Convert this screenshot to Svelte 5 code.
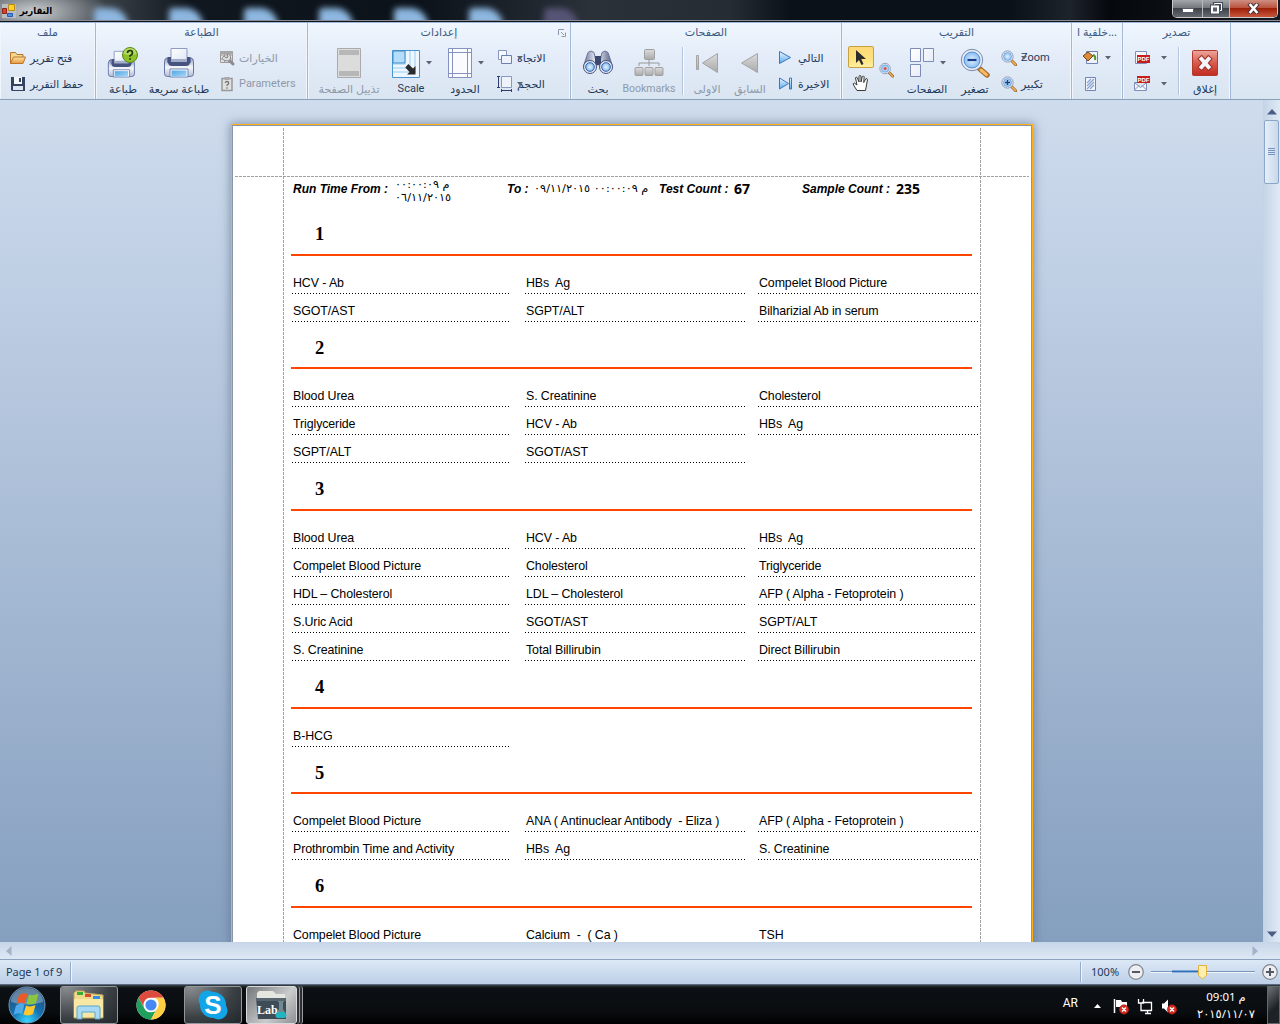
<script>
  const sections = [
    { no: 1, wide: true, tests: ['HCV - Ab', 'HBs  Ag', 'Compelet Blood Picture', 'SGOT/AST', 'SGPT/ALT', 'Bilharizial Ab in serum'] },
    { no: 2, wide: true, tests: ['Blood Urea', 'S. Creatinine', 'Cholesterol', 'Triglyceride', 'HCV - Ab', 'HBs  Ag', 'SGPT/ALT', 'SGOT/AST'] },
    { no: 3, tests: ['Blood Urea', 'HCV - Ab', 'HBs  Ag', 'Compelet Blood Picture', 'Cholesterol', 'Triglyceride', 'HDL – Cholesterol', 'LDL – Cholesterol', 'AFP ( Alpha - Fetoprotein )', 'S.Uric Acid', 'SGOT/AST', 'SGPT/ALT', 'S. Creatinine', 'Total Billirubin', 'Direct Billirubin'] },
    { no: 4, tests: ['B-HCG'] },
    { no: 5, wide: true, tests: ['Compelet Blood Picture', 'ANA ( Antinuclear Antibody  - Eliza )', 'AFP ( Alpha - Fetoprotein )', 'Prothrombin Time and Activity', 'HBs  Ag', 'S. Creatinine'] },
    { no: 6, tests: ['Compelet Blood Picture', 'Calcium  -  ( Ca )', 'TSH'] }
  ];
</script>

{#snippet caret()}
  <svg class="caret" width="6" height="4" viewBox="0 0 6 4"><path d="M0 0h6L3 3.5z" fill="#5b6470" /></svg>
{/snippet}

{#snippet printer()}
  <path d="M8 1.500h16v12H8z" fill="url(#paper)" stroke="#8d9cc0" />
  <path d="M4.500 10.500q-3 1-3 4v12q0 3 3 3h23q3 0 3-3v-12q0-3-3-4v5h-23z" fill="url(#steel)" stroke="#6474a4" />
  <path d="M5 10h3v4h16v-4h3v5q0 4-4 4H9q-4 0-4-4z" fill="#46527f" />
  <path d="M8 12h16v3H8z" fill="#a3acc9" />
  <path d="M7 22h18v8H7z" fill="#fff" stroke="#7182ad" />
  <path d="M8.500 23.500h15v6h-15z" fill="url(#sky)" />
{/snippet}

{#snippet lens(mark)}
  <path d="M10.500 10.500l4.200 4.200" stroke="#93612c" stroke-width="3" stroke-linecap="round" />
  <path d="M11 11l3.600 3.600" stroke="#f4b152" stroke-width="1.600" stroke-linecap="round" />
  <circle cx="6.500" cy="6.500" r="5.600" fill="#eef4fb" stroke="#8d99b5" />
  <circle cx="6.500" cy="6.500" r="4" fill="url(#glass)" stroke="#6d9fd6" stroke-width=".7" />
  {#if mark === '+'}<path d="M4 6.500h5M6.500 4v5" stroke="#1b3f8c" stroke-width="1.400" />{/if}
{/snippet}

<svg class="defs" width="0" height="0" aria-hidden="true">
  <defs>
    <linearGradient id="paper" x2="1" y2="1"><stop stop-color="#fff" /><stop offset="1" stop-color="#dfe6f4" /></linearGradient>
    <linearGradient id="steel" x2="0" y2="1"><stop stop-color="#8d98bd" /><stop offset=".5" stop-color="#f4f6fb" /><stop offset="1" stop-color="#b4bdd8" /></linearGradient>
    <linearGradient id="barrel"><stop stop-color="#6a7699" /><stop offset=".45" stop-color="#f4f6fb" /><stop offset="1" stop-color="#4d5a82" /></linearGradient>
    <linearGradient id="sky" x2="1" y2="1"><stop stop-color="#4fa6e4" /><stop offset="1" stop-color="#a9d8f7" /></linearGradient>
    <linearGradient id="grey" x2="0" y2="1"><stop stop-color="#dcdcdc" /><stop offset="1" stop-color="#a9a9a9" /></linearGradient>
    <linearGradient id="play" x2="0" y2="1"><stop stop-color="#eef7ff" /><stop offset="1" stop-color="#56aaf0" /></linearGradient>
    <linearGradient id="red" x2="0" y2="1"><stop stop-color="#eba89c" /><stop offset=".5" stop-color="#d9594c" /><stop offset="1" stop-color="#c22c20" /></linearGradient>
    <linearGradient id="folder" x2="0" y2="1"><stop stop-color="#fbe3a8" /><stop offset="1" stop-color="#e9993c" /></linearGradient>
    <radialGradient id="glass"><stop stop-color="#e4f3ff" /><stop offset="1" stop-color="#86bdf2" /></radialGradient>
    <radialGradient id="orb" cy=".95" r=".9"><stop stop-color="#35d6ff" /><stop offset=".45" stop-color="#1574b4" /><stop offset="1" stop-color="#24476d" /></radialGradient>
  </defs>
</svg>

<div class="window">
  <header class="titlebar">
    <svg class="appicon" width="14" height="14" viewBox="0 0 14 14"><path d="M0 0h14v14H0z" fill="#b9bcc0" /><path d="M6.500.5h6v6h-6z" fill="#ffd02c" stroke="#b68a14" /><path d="M.5 4.500h4v5h-4z" fill="#d8402c" stroke="#8d241a" /><path d="M5.500 9.500h5v3h-5z" fill="#4b8ce8" stroke="#2a5bb0" /></svg>
    <span class="title" dir="rtl">التقارير</span>
    <div class="glow">
      <i></i><i></i><i></i><i></i><i></i><i></i><i class="violet"></i>
    </div>
    <div class="controls">
      <span class="min"><svg width="12" height="5" viewBox="0 0 12 5"><path d="M.5.500h11v4H.5z" fill="#fff" stroke="#555b66" /></svg></span>
      <span class="max"><svg width="13" height="13" viewBox="0 0 13 13"><path d="M4.500 1.500h7v7h-7z" fill="none" stroke="#464d59" stroke-width="3" /><path d="M4.500 1.500h7v7h-7z" fill="none" stroke="#fff" /><path d="M2 4.500h6v6H2z" fill="#59606b" stroke="#464d59" stroke-width="4" /><path d="M2 4.500h6v6H2z" fill="#59606b" stroke="#fff" stroke-width="2" /></svg></span>
      <span class="shut"><svg width="13" height="11" viewBox="0 0 13 11"><path d="M3.500 2l6 7M9.500 2l-6 7" stroke="#51343a" stroke-width="4.500" stroke-linecap="square" /><path d="M3.500 2l6 7M9.500 2l-6 7" stroke="#fff" stroke-width="2.600" stroke-linecap="square" /></svg></span>
    </div>
  </header>

  <nav class="ribbon">
    <section class="group file">
      <h2 dir="rtl">ملف</h2>
      <div class="body">
        <div class="stack">
          <div class="small"><svg width="16" height="16" viewBox="0 0 16 16"><path d="M.5 13.500v-11h5l1.500 2h6v3" fill="#f7d78f" stroke="#b9762b" /><path d="M.5 13.500l3-6.500h12l-2.500 6.500z" fill="url(#folder)" stroke="#b9762b" /></svg><span dir="rtl">فتح تقرير</span></div>
          <div class="small"><svg width="16" height="16" viewBox="0 0 16 16"><path d="M1 1h14v14H2l-1-1z" fill="#34435f" /><path d="M4 1h8v7H4z" fill="#f3f6fb" /><path d="M9 2h2v4H9z" fill="#34435f" /><path d="M3 10h10v4H3z" fill="#dbe5f2" /></svg><span class="snug" dir="rtl">حفظ التقرير</span></div>
        </div>
      </div>
    </section>

    <section class="group print">
      <h2 dir="rtl">الطباعة</h2>
      <div class="body">
        <div class="big">
          <svg width="32" height="32" viewBox="0 0 32 32"><g transform="translate(0 3) scale(.9)">{@render printer()}</g><circle cx="23" cy="8" r="7.500" fill="#8fc12b" stroke="#57881a" /><path d="M16.500 7a6.500 6 0 0 1 13 0q-6 2-13 0z" fill="#c5e37a" opacity=".7" /><path d="M20.500 6q0-2.500 2.500-2.500T25.500 6q0 1.500-2.500 2.800v1M23 11.200v1.600" fill="none" stroke="#1d3a07" stroke-width="1.700" /></svg>
          <span dir="rtl">طباعة</span>
        </div>
        <div class="big"><svg width="32" height="32" viewBox="0 0 32 32">{@render printer()}</svg><span dir="rtl">طباعة سريعة</span></div>
        <div class="stack">
          <div class="small off"><svg width="16" height="16" viewBox="0 0 16 16"><path d="M1.500 1.500h12v11h-12zM1.500 5h12M1.500 9h12M5.500 1.500v11M9.500 1.500v11" fill="#e2e2e2" stroke="#9b9b9b" /><path d="M1 1h13v3H1z" fill="#a5a5a5" /><path d="M8 8l6 6" stroke="#8c8c8c" stroke-width="3" stroke-linecap="round" /><path d="M5 6l2 2 2-1-1-3q4 0 3.500 4T6 10.500 5 6z" fill="#dedede" stroke="#8c8c8c" /></svg><span dir="rtl">الخيارات</span></div>
          <div class="small off"><svg width="16" height="16" viewBox="0 0 16 16"><path d="M3 2.500h10v12H3z" fill="#e0e0e0" stroke="#999" stroke-width="1.500" /><path d="M5.500 1h5v3h-5z" fill="#aaa" /><path d="M6.300 7q0-1.500 1.700-1.500T9.700 7 8 9v1M8 11.300v1.400" fill="none" stroke="#777" stroke-width="1.300" /></svg><span class="en">Parameters</span></div>
        </div>
      </div>
    </section>

    <section class="group settings">
      <h2 dir="rtl">إعدادات</h2>
      <svg class="launcher" width="8" height="8" viewBox="0 0 8 8"><path d="M.5 6V.5H6M3 3l3 3M7.500 3.500v4h-4" fill="none" stroke="#8a99ae" /></svg>
      <div class="body">
        <div class="big off"><svg width="26" height="32" viewBox="0 0 26 32"><path d="M1.500 1.500h23v29h-23z" fill="#dcdcdc" stroke="#aaa" /><path d="M3 3h20v5H3zM3 24h20v5H3z" fill="#b7b7b7" /></svg><span dir="rtl">تذييل الصفحة</span></div>
        <div class="big">
          <div class="pair"><svg width="30" height="32" viewBox="0 0 30 32"><path d="M1.500 3.500h27v27h-27z" fill="#eef7ff" stroke="#4796cf" /><path d="M14 4v13H2M19 4v17H2M24 4v21H2" fill="none" stroke="#b5dcf8" stroke-width="1.500" /><path d="M2 4h12v12H2z" fill="#b4dcfb" stroke="#3c8cc8" /><path d="M17.300 17l4.700 4.500 2.500-2.500v8.500H16l2.500-2.500-4.200-4.500z" fill="#2b2b2b" /></svg>{@render caret()}</div>
          <span class="en">Scale</span>
        </div>
        <div class="big">
          <div class="pair"><svg width="26" height="32" viewBox="0 0 26 32"><path d="M1.500 1.500h23v29h-23z" fill="#fafbff" stroke="#8593bd" /><path d="M5.500 1v30M20.500 1v30M1 5.500h24M1 26.500h24" stroke="#8593bd" /></svg>{@render caret()}</div>
          <span dir="rtl">الحدود</span>
        </div>
        <div class="stack">
          <div class="small over"><svg width="16" height="16" viewBox="0 0 16 16"><path d="M1.500.5h8v9h-8z" fill="#f7f9ff" stroke="#8896c0" /><path d="M4.500 5.500h10v8h-10z" fill="#eef2fb" stroke="#6f7eb0" /></svg><span dir="rtl">الاتجاه</span>{@render caret()}</div>
          <div class="small over"><svg width="16" height="16" viewBox="0 0 16 16"><path d="M4.500.5h10v11h-10z" fill="#eef2fb" stroke="#8896c0" /><path d="M1.500 0v12M0 .5h3M0 11.500h3M4 14.500h11M4.500 13v3M14.500 13v3" stroke="#2d3f6e" /></svg><span dir="rtl">الحجم</span>{@render caret()}</div>
        </div>
      </div>
    </section>

    <section class="group pages">
      <h2 dir="rtl">الصفحات</h2>
      <div class="body">
        <div class="big"><svg width="32" height="32" viewBox="0 0 32 32"><path d="M6 5.500q3-3 6 0l3 13.500H1.500zM20 5.500q3-3 6 0L30.500 19H17z" fill="url(#barrel)" stroke="#69749a" /><path d="M13 9h6v9h-6z" fill="#3c486f" /><circle cx="8" cy="20" r="6.500" fill="#dfe4f0" stroke="#47557f" /><circle cx="24" cy="20" r="6.500" fill="#dfe4f0" stroke="#47557f" /><circle cx="8" cy="20" r="4.300" fill="url(#glass)" stroke="#3561ad" /><circle cx="24" cy="20" r="4.300" fill="url(#glass)" stroke="#3561ad" /></svg><span dir="rtl">بحث</span></div>
        <div class="big off"><svg width="32" height="32" viewBox="0 0 32 32"><path d="M16 12v7M6 19v-3h20v3" fill="none" stroke="#999" /><g fill="url(#grey)" stroke="#a0a0a0"><rect x="11.500" y="2.500" width="10" height="10" rx="1" /><rect x="2" y="20.500" width="8" height="8" rx="1" /><rect x="12" y="20.500" width="8" height="8" rx="1" /><rect x="22" y="20.500" width="8" height="8" rx="1" /></g></svg><span class="en tight">Bookmarks</span></div>
        <hr />
        <div class="big off"><svg width="32" height="32" viewBox="0 0 32 32"><path d="M26.500 6.500v19l-15-9.500zM5.500 8.500h2v14h-2z" fill="url(#grey)" stroke="#a4a4a4" /></svg><span dir="rtl">الاولى</span></div>
        <div class="big off"><svg width="32" height="32" viewBox="0 0 32 32"><path d="M23.500 6.500v19l-16-9.500z" fill="url(#grey)" stroke="#a4a4a4" /></svg><span dir="rtl">السابق</span></div>
        <div class="stack">
          <div class="small"><svg width="16" height="16" viewBox="0 0 16 16"><path d="M1.500 1.500v12l11-6z" fill="url(#play)" stroke="#3f74c0" /></svg><span dir="rtl">التالي</span></div>
          <div class="small"><svg width="16" height="16" viewBox="0 0 16 16"><path d="M1.500 2v11l9-5.500zM11.500 2h2v11h-2z" fill="url(#play)" stroke="#3f74c0" /></svg><span dir="rtl">الاخيرة</span></div>
        </div>
      </div>
    </section>

    <section class="group zoom">
      <h2 dir="rtl">التقريب</h2>
      <div class="body">
        <div class="tools">
          <span class="pick"><svg width="12" height="17" viewBox="0 0 12 17"><path d="M1 1v13l3-3 2.500 5 2-1L6.200 10H11z" fill="#2b2b2b" /></svg></span>
          <svg class="hand" width="18" height="18" viewBox="0 0 18 18"><path d="M5 16.500L1.500 11q-.8-2 .8-2L5 11 3.500 4q.5-1.600 1.700-.4L7 8V2.200q1-1.500 2 0V8l1.300-5.500q1.200-1.200 1.900.3L11.700 8.500l2.100-3.700q1.500-.8 1.700.8L13.500 16.500z" fill="#fff" stroke="#3a3a3a" /></svg>
          <svg class="loupe" width="15" height="16" viewBox="0 0 16 16">{@render lens('')}<circle cx="6.500" cy="6.500" r="1.600" fill="#dd4a3a" /></svg>
        </div>
        <div class="big">
          <div class="pair"><svg width="26" height="32" viewBox="0 0 26 32"><path d="M1.500 1.500h10v13h-10zM14.500 1.500h10v13h-10zM1.500 17.500h10v12h-10z" fill="url(#paper)" stroke="#7c8bb8" /></svg>{@render caret()}</div>
          <span class="snug" dir="rtl">الصفحات</span>
        </div>
        <div class="big"><svg width="32" height="32" viewBox="0 0 32 32"><path d="M21 22l7 6" stroke="#a86e2f" stroke-width="5.500" stroke-linecap="round" /><path d="M22 23l5.500 4.700" stroke="#f7bb66" stroke-width="3" stroke-linecap="round" /><circle cx="13" cy="13" r="10.700" fill="#e6edf7" stroke="#7d8aa8" /><circle cx="13" cy="13" r="8" fill="url(#glass)" stroke="#5a8fd0" /><path d="M8.500 13h9" stroke="#173c8a" stroke-width="2.200" /></svg><span dir="rtl">تصغير</span></div>
        <div class="stack">
          <div class="small over"><svg width="16" height="16" viewBox="0 0 16 16">{@render lens('')}</svg><span class="en">Zoom</span>{@render caret()}</div>
          <div class="small"><svg width="16" height="16" viewBox="0 0 16 16">{@render lens('+')}</svg><span dir="rtl">تكبير</span></div>
        </div>
      </div>
    </section>

    <section class="group backdrop">
      <h2>خلفية ا...</h2>
      <div class="body">
        <div class="stack">
          <div class="small"><svg width="16" height="16" viewBox="0 0 16 16"><path d="M3.500 1.500h11v12h-11z" fill="#eef2fb" stroke="#7383b5" /><path d="M0 6l5-4 5 4-5 5z" fill="#d98d3a" stroke="#7a4415" /><path d="M10 5q3 1 2 5" fill="none" stroke="#4a9a20" stroke-width="2" /></svg>{@render caret()}</div>
          <div class="small"><svg width="16" height="16" viewBox="0 0 16 16"><path d="M2.500 1.500h10v13h-10z" fill="#f1f5fd" stroke="#7383b5" /><path d="M4 7l4-4M4 10l7-7M4 13l7-7M7 13l4-4" stroke="#8aa5cf" stroke-width="1.300" /></svg></div>
        </div>
      </div>
    </section>

    <section class="group export">
      <h2 dir="rtl">تصدير</h2>
      <div class="body">
        <div class="stack">
          <div class="small"><svg width="16" height="16" viewBox="0 0 16 16"><path d="M1.500 1.500h11v12h-11z" fill="#f5f8fe" stroke="#8090ba" /><path d="M3 5h13v8H3z" fill="#c61d1d" /><text x="9.500" y="11.300" class="pdf">PDF</text></svg>{@render caret()}</div>
          <div class="small"><svg width="16" height="16" viewBox="0 0 16 16"><path d="M.5 6.500h12v8H.5zM.5 14l4.500-4.500M12.500 14L8 9.500M1 7l5.500 4.500L12 7" fill="#f5f8fe" stroke="#8090ba" /><path d="M3 0h13v7H3z" fill="#c61d1d" /><text x="9.500" y="5.700" class="pdf">PDF</text></svg>{@render caret()}</div>
        </div>
        <hr />
        <div class="big"><svg width="26" height="32" viewBox="0 0 26 32"><rect x=".5" y="3.500" width="25" height="25" rx="1" fill="url(#red)" stroke="#b23a30" /><path d="M9.500 12l7 8M16.500 12l-7 8" stroke="#9c2f29" stroke-width="6" stroke-linecap="square" /><path d="M9.500 12l7 8M16.500 12l-7 8" stroke="#f4f6fb" stroke-width="4" stroke-linecap="square" /></svg><span dir="rtl">إغلاق</span></div>
      </div>
    </section>
  </nav>

  <main class="work">
    <div class="viewer">
      <article class="page">
        <div class="guide left"></div>
        <div class="guide right"></div>
        <div class="guide top"></div>
        <div class="summary">
          <b class="from">Run Time From :</b>
          <span class="when narrow">٠٠:٠٠:٠٩ م<br />٠٦/١١/٢٠١٥</span>
          <b class="to">To :</b>
          <span class="when">٠٩/١١/٢٠١٥ ٠٠:٠٠:٠٩ م</span>
          <b class="tc">Test Count :</b><strong>67</strong>
          <b class="sc">Sample Count :</b><strong>235</strong>
        </div>
        {#each sections as s}
          <section class="block" class:wide={s.wide}>
            <h3>{s.no}</h3>
            <div class="tests">
              {#each s.tests as t}<p>{t}</p>{/each}
            </div>
          </section>
        {/each}
      </article>
    </div>
    <aside class="vbar">
      <svg width="10" height="6" viewBox="0 0 10 6"><path d="M0 5.500L5 0l5 5.500z" fill="#4c5d85" /></svg>
      <div class="thumb"><i></i><i></i><i></i><i></i></div>
      <svg width="10" height="6" viewBox="0 0 10 6"><path d="M0 .5L5 6 10 .5z" fill="#4c5d85" /></svg>
    </aside>
  </main>

  <div class="hbar">
    <svg width="6" height="10" viewBox="0 0 6 10"><path d="M5.500 0L0 5l5.500 5z" fill="#a3b1c9" /></svg>
    <svg width="6" height="10" viewBox="0 0 6 10"><path d="M.5 0L6 5 .5 10z" fill="#a3b1c9" /></svg>
  </div>

  <footer class="status">
    <span class="count">Page 1 of 9</span>
    <i class="sep"></i>
    <i class="sep push"></i>
    <span class="pct">100%</span>
    <svg width="144" height="20" viewBox="0 0 144 20">
      <circle cx="9" cy="10" r="7.300" fill="#eceef2" stroke="#81858e" stroke-width="1.200" /><path d="M5 10h8" stroke="#54585f" stroke-width="2" />
      <path d="M24 10.500h104" stroke="#fff" opacity=".7" /><path d="M24 9.500h104" stroke="#7b95bb" /><path d="M45 9.500h28" stroke="#2f6fba" stroke-width="2" />
      <path d="M71.500 3.500h8v10l-4 3.500-4-3.500z" fill="#fdeeb0" stroke="#e3b33d" />
      <circle cx="143" cy="10" r="7.300" fill="#eceef2" stroke="#81858e" stroke-width="1.200" /><path d="M139 10h8M143 6v8" stroke="#54585f" stroke-width="2" />
    </svg>
  </footer>

  <footer class="taskbar">
    <svg class="start" width="38" height="38" viewBox="0 0 38 38"><circle cx="19" cy="19" r="18" fill="url(#orb)" stroke="#6f9abc" /><path d="M3 16a16 14 0 0 1 32 0q-16 5-32 0z" fill="#fff" opacity=".3" /><path d="M11 9q4-3 8.500-1l-2.500 9.500q-4-2-8.500.5z" fill="#ee5a25" /><path d="M21 8.500q4 2 9.500-1L28 17q-4 2.500-9.500 1z" fill="#8cc63f" /><path d="M8 19.500q4-3 8.500-1L14 28q-4-2-8.500 1z" fill="#50a9e8" /><path d="M18 19.500q4 2 9.500-.5L25 28q-4 2.500-9.500.5z" fill="#fdc72f" /></svg>
    <span class="task lit">
      <svg width="34" height="30" viewBox="0 0 34 30"><path d="M2 3l2-2h8l1 2 9 1 9 1v23H2z" fill="#efd98b" stroke="#c2a75a" /><path d="M5 2h6v3H5z" fill="#34ac36" /><path d="M13 4h6v3h-6z" fill="#d94a30" /><path d="M21 6h7v3h-7z" fill="#338fe0" /><path d="M2 9h29v18H2z" fill="#f9e8a5" /><path d="M5 29V18q0-2 2-2h19q2 0 2 2v11h-5v-7H10v7z" fill="#a8dbf3" stroke="#5ba5cc" /></svg>
    </span>
    <svg class="chrome" width="30" height="30" viewBox="0 0 30 30"><circle cx="15" cy="15" r="14.500" fill="#fff" /><path d="M2.440 7.750A14.500 14.500 0 0 1 27.560 7.750H15a7 7 0 0 0-6.500 10.500z" fill="#dd4b3e" /><path d="M2.440 7.750A14.500 14.500 0 0 0 15 29.500L21 18.500a7 7 0 0 1-12.500 0z" fill="#1fa15d" /><path d="M27.560 7.750A14.500 14.500 0 0 1 15 29.500L21 18.500a7 7 0 0 0-2-10.750z" fill="#ffcf43" /><circle cx="15" cy="15" r="7" fill="#fff" /><circle cx="15" cy="15" r="5.600" fill="#4688f4" /></svg>
    <span class="task lit skype"><svg width="32" height="32" viewBox="0 0 32 32"><circle cx="10.500" cy="10.500" r="9" fill="#12a5e8" /><circle cx="21.500" cy="21.500" r="9" fill="#12a5e8" /><circle cx="16" cy="16" r="13" fill="#12a5e8" /><text x="16" y="24.500">S</text></svg></span>
    <span class="task lab"><svg width="34" height="32" viewBox="0 0 34 32"><path d="M2 4l2-2h14l3 3h9v8H2z" fill="#e6e6e0" /><path d="M1 9h30v21H3z" fill="#3e4c58" /><path d="M1 9h30v3H1z" fill="#59656e" /><text x="2" y="25">Lab.</text><path d="M23 12h6v1h-1v7l3 5q1 4-3 4h-4q-4 0-3-4l3-5v-7h-1z" fill="#bfe9ea" opacity=".4" /><path d="M22 23h8l1.500 3q0 3-3 3h-5q-3 0-3-3z" fill="#22b5c0" /></svg></span>
    <i class="edge"></i><i class="edge"></i>
    <span class="lang">AR</span>
    <svg class="tray" width="88" height="20" viewBox="0 0 88 20">
      <path d="M1 12h7L4.500 8z" fill="#fff" />
      <path d="M21.500 3v14" stroke="#fff" stroke-width="1.500" /><path d="M23 4h5l1 2h5v6h-6l-1-1h-4z" fill="#fff" />
      <path d="M49 6.500h9.500v8H48v-3M52 17.500h6M54.500 15v2M45.500 3v4h5V3M48 7v5" fill="none" stroke="#fff" stroke-width="1.300" />
      <path d="M69 7.500h2l4-4v13l-4-4h-2z" fill="#fff" />
      <g fill="#d62a1e" stroke="#8e1a12" stroke-width=".5"><circle cx="31" cy="13.500" r="4.700" /><circle cx="79" cy="13.500" r="4.700" /></g>
      <path d="M29 11.500l4 4M33 11.500l-4 4M77 11.500l4 4M81 11.500l-4 4" stroke="#fff" stroke-width="1.500" />
    </svg>
    <span class="clock">09:01 م<br />٢٠١٥/١١/٠٧</span>
    <i class="desk"></i>
  </footer>
</div>

<style>
  :global(body) { background: #000; overflow: hidden; }
  .window, .window * { box-sizing: border-box; }
  .window { width: 1280px; height: 1024px; display: flex; flex-direction: column; font: 11px/14px "Noto Sans", "DejaVu Sans", sans-serif; color: #1e395b; overflow: hidden; }
  .defs { position: absolute; }
  svg { display: block; flex: none; }
  h2, h3, p { margin: 0; }
  i { display: block; }

  .titlebar { height: 22px; display: flex; align-items: flex-start; border-bottom: 1px solid #11161d; box-shadow: inset 0 -1px #8b8b93; background: radial-gradient(ellipse 75px 30px at 34px 12px, #ccd0d3, #777d83 60%, transparent), linear-gradient(90deg, #4c5258, #42484e 90px, #10171f 190px, #0b121a 420px, #2b3139 590px, #262c34 730px, #0b1119 790px, #0b1119 1010px, #1d232b 1070px, #05080c 1110px, #171b21 1280px); }
  .appicon { margin: 4px 0 0 2px; }
  .title { width: 30px; margin: 4px 0 0 5px; font: bold 9.500px/14px "DejaVu Sans Condensed", "DejaVu Sans", sans-serif; color: #000; white-space: nowrap; display: flex; justify-content: center; }
  .glow { flex: 1; display: flex; gap: 41px; padding: 8px 0 0 43px; height: 20px; overflow: hidden; }
  .glow i { width: 34px; height: 24px; border-radius: 4px 18px 0 0; background: #8db7e0; filter: blur(3px); }
  .glow .violet { background: #565475; }
  .controls { display: flex; width: 106px; height: 18px; margin-right: 2px; border: 1px solid #c7c9cc; border-top: 0; border-radius: 0 0 5px 5px; overflow: hidden; }
  .controls span { display: flex; align-items: center; justify-content: center; background: linear-gradient(#a4a7ab, #74797f 45%, #3c4248 50%, #646a70); border-right: 1px solid #b9bbbe; }
  .controls .min { width: 31px; padding-top: 4px; }
  .controls .max { width: 27px; }
  .controls .shut { width: 48px; border: 0; background: linear-gradient(#cf8e82, #b9543f 45%, #9c2008 50%, #c9583b); }

  .ribbon { height: 78px; display: flex; border-top: 1px solid #9db8da; border-bottom: 1px solid #8b9fbb; background: linear-gradient(#eff6fe, #e3ecf8 45%, #dae5f2); }
  .group { position: relative; border-right: 1px solid #a3b8d5; box-shadow: inset -1px 0 #f1f6fc, inset 1px 0 #f1f6fc; }
  .group h2 { height: 18px; padding-top: 1px; text-align: center; font-size: 11px; font-weight: normal; line-height: 15px; color: #3b5a82; white-space: nowrap; }
  .body { display: grid; height: 58px; padding-left: 1px; }
  .file { width: 96px; } .print { width: 212px; } .settings { width: 263px; } .pages { width: 271px; } .zoom { width: 230px; } .backdrop { width: 51px; } .export { width: 108px; }
  .file .body { padding-left: 10px; }
  .print .body { grid-template-columns: 52px 60px 1fr; }
  .print .stack { padding-left: 10px; }
  .settings .body { grid-template-columns: 80px 44px 64px 1fr; }
  .pages .body { grid-template-columns: 52px 50px 18px 30px 56px 1fr; }
  .zoom .body { grid-template-columns: 54px 60px 36px 1fr; }
  .zoom .stack { padding-left: 8px; }
  .backdrop .body { padding-left: 11px; }
  .export .body { padding-left: 11px; grid-template-columns: 36px 10px 46px; }
  .backdrop .small { gap: 6px; }
  .export .small { gap: 11px; }
  .big { display: flex; flex-direction: column; align-items: center; padding-top: 6px; white-space: nowrap; }
  .big > span { display: flex; justify-content: center; width: 0; margin-top: 3px; }
  .pair { display: flex; align-items: center; gap: 5px; }
  .stack { display: flex; flex-direction: column; padding-top: 4px; }
  .small { position: relative; display: flex; align-items: center; gap: 4px; height: 26px; white-space: nowrap; }
  .over .caret { position: absolute; left: 20px; top: 11px; }
  .en { font: 11px/14px Roboto, sans-serif; }
  .big > .tight { font-size: 10.500px; }
  .snug { font-size: 10.500px; }
  .off { color: #8e99a8; }
  hr { width: 2px; height: 48px; margin: 6px 0 0 8px; border: 0; border-left: 1px solid #b4c5db; background: #f8fbff; }
  .launcher { position: absolute; right: 4px; top: 6px; }
  .tools { display: grid; grid-template-columns: 28px 1fr; grid-template-rows: 22px 26px; padding: 5px 0 0 5px; }
  .pick { display: flex; align-items: center; justify-content: center; width: 26px; height: 22px; border: 1px solid #c9a040; border-radius: 2px; background: linear-gradient(#fdd977, #ffe27d 60%, #fff0a0); }
  .hand { grid-row: 2; margin: 6px 0 0 4px; }
  .loupe { grid-column: 2; grid-row: 1 / 3; margin: 16px 0 0 3px; }
  .pdf { font: bold 6px "Liberation Sans", sans-serif; fill: #fff; text-anchor: middle; }
  .export .big { width: 50px; }

  .work { height: 842px; display: flex; background: linear-gradient(#cfdcee, #859fbf); }
  .viewer { width: 1263px; overflow: hidden; }
  .page { position: relative; width: 802px; height: 900px; margin: 24px 0 0 231px; padding: 56px 0 0 59px; background: #fff; border: 1px solid #fbb117; box-shadow: inset 0 0 0 1px #8a96a6, 0 0 9px 1px #5a6c85a0; color: #000; }
  .guide { position: absolute; }
  .guide.left, .guide.right { top: 3px; bottom: 0; width: 1px; background: repeating-linear-gradient(#a0a0a0 0 3px, transparent 3px 4px); }
  .guide.left { left: 51px; } .guide.right { left: 748px; }
  .guide.top { top: 51px; left: 3px; right: 3px; height: 1px; background: repeating-linear-gradient(90deg, #a0a0a0 0 3px, transparent 3px 4px); }
  .summary { display: flex; height: 38.600px; padding-left: 2px; font: 12px/16px "Liberation Sans", "DejaVu Sans", sans-serif; white-space: nowrap; }
  .summary b { font-style: italic; }
  .from { width: 102px; } .to { width: 27px; } .tc { width: 75px; } .sc { width: 94px; }
  .when { width: 125px; font: 11.300px/16px "DejaVu Sans", sans-serif; direction: ltr; unicode-bidi: bidi-override; }
  .narrow { width: 112px; margin-top: -3px; line-height: 13px; }
  .summary strong { font: bold 14px/16px "Noto Sans", sans-serif; width: 68px; }
  .block { padding-bottom: 11.650px; }
  .block h3 { height: 36px; padding: 4.500px 0 0 24px; border-bottom: 2px solid #ff4500; margin-right: 60px; font: bold 18.500px/20px "Liberation Serif", serif; }
  .tests { display: grid; grid-template-columns: 233px 233px 221px; grid-auto-rows: 28px; margin-left: 1px; padding-top: 10px; }
  .tests p { margin-right: 15px; padding: 8px 0 0 1px; font: 12.400px/18px "Liberation Sans", sans-serif; letter-spacing: -.1px; white-space: pre; background: repeating-linear-gradient(90deg, #000 0 1px, transparent 1px 3px) left 0 bottom 0 / 100% 1px no-repeat; }
  .tests p:nth-child(3n + 2) { margin-right: 12px; }
  .tests p:nth-child(3n) { margin-right: 3px; }
  .wide .tests p:nth-child(3n) { margin-right: 1px; }

  .vbar { width: 17px; display: flex; flex-direction: column; align-items: center; padding: 9px 0 5px; background: linear-gradient(90deg, #c3d3e6, #e0eaf6); }
  .thumb { width: 15px; height: 64px; margin: 5px 0 auto; padding-top: 27px; border: 1px solid #8ba6cb; border-radius: 2px; background: linear-gradient(90deg, #e6eff9, #c7d8eb); display: flex; flex-direction: column; align-items: center; gap: 1px; }
  .thumb i { width: 7px; height: 1px; background: #7593bd; }
  .hbar { height: 17px; display: flex; align-items: center; justify-content: space-between; padding: 0 22px 0 6px; background: linear-gradient(#c6d6e8, #dde8f4); }
  .status { height: 26px; display: flex; align-items: center; padding-left: 6px; border-top: 1px solid #8ca1be; border-bottom: 1px solid #5a6a80; background: linear-gradient(#dce8f6, #bccfe7); }
  .count { width: 64px; white-space: nowrap; letter-spacing: -.1px; }
  .sep { width: 2px; height: 20px; border-left: 1px solid #94abca; background: #eff5fc; }
  .push { margin-left: auto; }
  .pct { width: 45px; padding-left: 9px; }
  .status svg { overflow: visible; margin-right: 9px; }

  .taskbar { height: 39px; display: flex; align-items: center; background: linear-gradient(#3a4046, #0c1014 3px, #0a0d10 70%, #000); color: #fff; }
  .start { margin: 0 14px 0 8px; }
  .task { display: flex; align-items: center; justify-content: center; width: 58px; height: 38px; border: 1px solid #92979b; border-radius: 3px; background: radial-gradient(ellipse at 10% 0, #8a8d90, #3b4044 60%, #22272b); }
  .chrome { margin: 0 18px; }
  .lab { width: 51px; margin-left: 4px; background: linear-gradient(130deg, #75787a, #c9cbcd 60%, #8d9092); border-color: #d9dadb; }
  .edge { width: 3px; height: 38px; border-right: 1px solid #989b9e; background: #2b2f33; border-radius: 0 3px 3px 0; }
  .skype text { font: bold 26px "Liberation Sans", sans-serif; fill: #fff; text-anchor: middle; }
  .lab text { font: bold 12px "Liberation Serif", serif; fill: #fff; }
  .lang { margin: 0 15px 4px auto; font: 12px/14px Roboto, sans-serif; }
  .tray { margin-top: 2px; }
  .clock { width: 70px; margin-left: 10px; margin-right: 6px; text-align: center; line-height: 17px; font-size: 11.500px; direction: ltr; unicode-bidi: bidi-override; white-space: nowrap; }
  .desk { width: 13px; height: 38px; border: 1px solid #63686d; background: linear-gradient(135deg, #6e7276, #1d2226 60%); }
</style>
